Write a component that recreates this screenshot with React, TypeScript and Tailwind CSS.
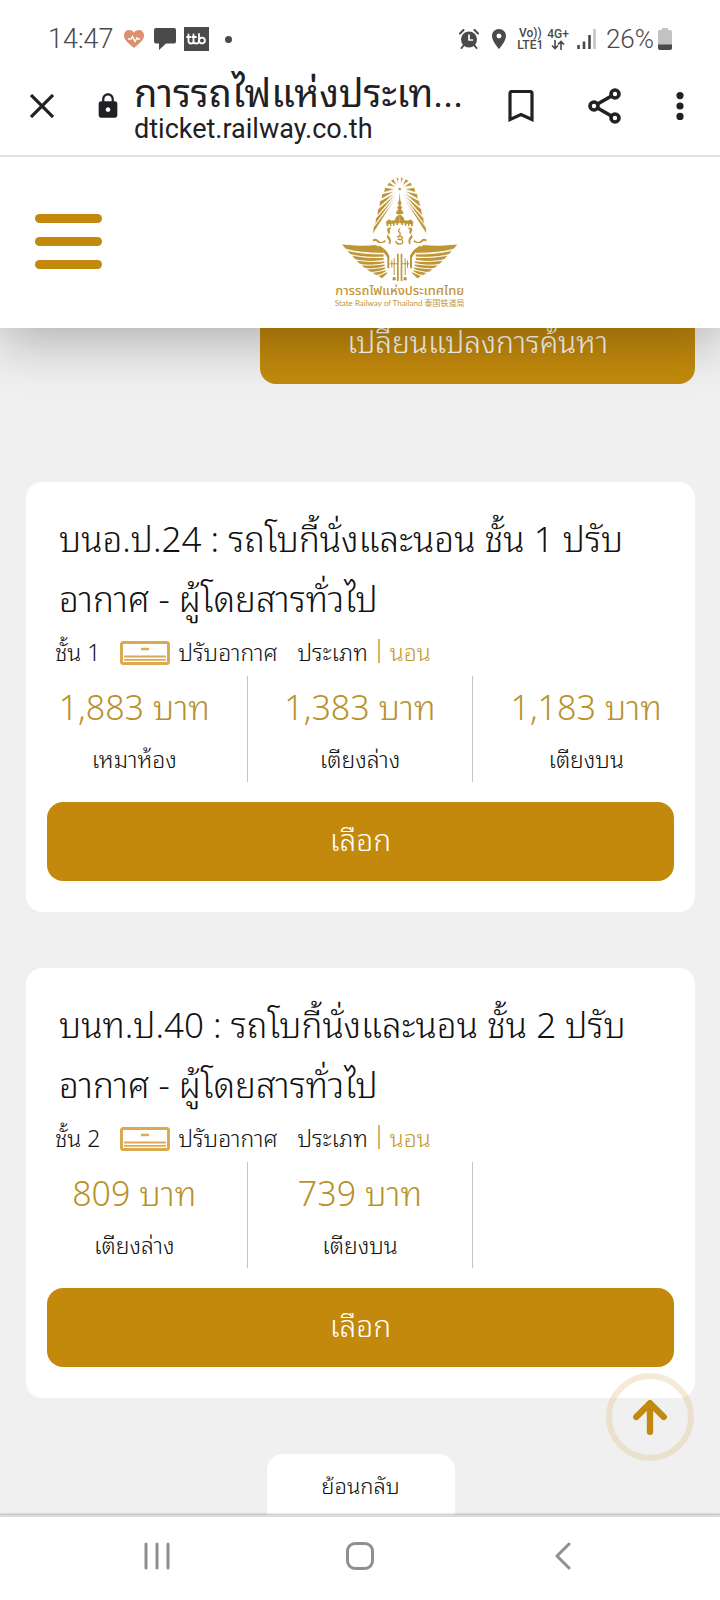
import { MdLocationOn, MdLock } from "react-icons/md";

const cars = [
  {
    id: "24",
    title: "บนอ.ป.24 : รถโบกี้นั่งและนอน ชั้น 1 ปรับอากาศ - ผู้โดยสารทั่วไป",
    level: "ชั้น 1",
    prices: [
      { amount: "1,883 บาท", berth: "เหมาห้อง" },
      { amount: "1,383 บาท", berth: "เตียงล่าง" },
      { amount: "1,183 บาท", berth: "เตียงบน" },
    ],
  },
  {
    id: "40",
    title: "บนท.ป.40 : รถโบกี้นั่งและนอน ชั้น 2 ปรับอากาศ - ผู้โดยสารทั่วไป",
    level: "ชั้น 2",
    prices: [
      { amount: "809 บาท", berth: "เตียงล่าง" },
      { amount: "739 บาท", berth: "เตียงบน" },
    ],
  },
];

export default function App() {
  return (
    <div className="flex h-screen flex-col overflow-hidden bg-[#f0f0f0] font-['Noto_Sans_Thai_Looped','Open_Sans','Noto_Sans_Thai','Noto_Sans',sans-serif] font-light text-[#111]">
      <StatusBar />
      <BrowserBar />
      <SiteHeader />

      <main className="relative min-h-0 flex-1 overflow-hidden pr-[25px] pl-[26px]">
        <div className="-mt-6 flex justify-end">
          <button type="button" className="h-20 w-[65%] rounded-2xl bg-[#c2890c] pb-2 text-3xl text-white">
            เปลี่ยนแปลงการค้นหา
          </button>
        </div>

        <div className="mt-[98px] space-y-14">
          {cars.map((car) => (
            <CarCard key={car.id} car={car} />
          ))}
        </div>

        <div className="mt-14 flex justify-center">
          <button type="button" className="h-20 w-[188px] rounded-2xl bg-white pb-5 text-[22px]">
            ย้อนกลับ
          </button>
        </div>

        <button
          type="button"
          aria-label="เลื่อนขึ้นด้านบน"
          className="absolute right-[26px] bottom-[54px] flex size-[88px] items-center justify-center rounded-full border-6 border-[#e0c48c]/35"
        >
          <svg viewBox="0 0 34 34" className="size-9" fill="none" stroke="#c2890c" strokeWidth="6" strokeLinecap="round" strokeLinejoin="round">
            <path d="M17 31V5M4 17 17 4l13 13" />
          </svg>
        </button>
      </main>

      <SystemNav />
    </div>
  );
}

type Car = (typeof cars)[number];

function CarCard({ car }: { car: Car }) {
  return (
    <section className="rounded-2xl bg-white px-[21px] pt-6 pb-[31px]">
      <h2 className="px-3 text-[35px] leading-[60px]">{car.title}</h2>

      <div className="flex h-[50px] items-center px-2 text-[23px]">
        <span className="mr-5">{car.level}</span>
        <AirconIcon />
        <span className="ml-2">ปรับอากาศ</span>
        <span className="ml-5">ประเภท</span>
        <span className="ml-[10px] border-l-2 border-[#dcb25c] pl-[10px] leading-6 text-[#c99a2e]">นอน</span>
      </div>

      <div className="-mx-[25px] grid h-[106px] grid-cols-3 divide-x divide-[#c4c4c4] text-center">
        {[0, 1, 2].map((i) => (
          <div key={i}>
            {car.prices[i] && (
              <>
                <p className="text-[34px] leading-[58px] text-[#b8922b]">{car.prices[i].amount}</p>
                <p className="text-[23px] leading-12">{car.prices[i].berth}</p>
              </>
            )}
          </div>
        ))}
      </div>

      <button type="button" className="mt-5 h-[79px] w-full rounded-2xl bg-[#c2890c] pb-2 text-3xl text-white">
        เลือก
      </button>
    </section>
  );
}

function AirconIcon() {
  return (
    <svg viewBox="0 0 50 24" className="mt-1 h-6 w-[50px]" fill="none" stroke="#dba950">
      <rect x="1.500" y="1.500" width="47" height="21" rx="2" strokeWidth="3" />
      <path d="M21 8h8" strokeWidth="2.500" />
      <path d="M4 15.500h42M4 18.800h42" strokeWidth="1.800" />
    </svg>
  );
}

function StatusBar() {
  return (
    <div className="flex h-16 shrink-0 items-center justify-between bg-white px-12 pt-[14px] font-[Roboto,sans-serif] text-[#4a4a4a]">
      <div className="flex items-center">
        <span className="text-[27px]">14:47</span>
        <svg viewBox="0 0 20 18" className="ml-[10px] h-[18px] w-5">
          <path d="M10 18C4 13 0 10 0 5.500 0 2 2.500 0 5.200 0 7.200 0 9 1 10 2.700 11 1 12.800 0 14.800 0 17.500 0 20 2 20 5.500 20 10 16 13 10 18z" fill="#dc906d" />
          <path d="M4 9h3l1.500-2.500 2.500 5L13 8l1 1h2" fill="none" stroke="#fff" strokeWidth="1.400" />
        </svg>
        <svg viewBox="0 0 22 22" className="ml-[10px] size-[22px]" fill="#4a4a4a">
          <path d="M2 0h18a2 2 0 0 1 2 2v11.500a2 2 0 0 1-2 2H12L5 22v-6.500H2a2 2 0 0 1-2-2V2a2 2 0 0 1 2-2z" />
        </svg>
        <span className="ml-2 flex h-6 w-[25px] items-center justify-center bg-[#4a4a4a]">
          <svg viewBox="0 0 20 12" className="h-3 w-5" fill="none" stroke="#fff" strokeWidth="1.800" strokeLinecap="round">
            <path d="M2.500 1.500V8q0 2.500 2.500 2.500T7.500 8V1.500M1 4h3.500M6.500 4H10M7.500 8q0 2.500 2.700 2.500T13 8V1" />
            <circle cx="16" cy="7.600" r="2.900" />
          </svg>
        </span>
        <span className="ml-4 size-[7px] rounded-full bg-[#4a4a4a]" />
      </div>

      <div className="flex items-center">
        <AlarmIcon />
        <MdLocationOn className="ml-2 size-6" />
        <span className="ml-[6px] text-center text-xs leading-3 font-medium">
          Vo))
          <br />
          LTE1
        </span>
        <span className="ml-1 flex flex-col items-center text-xs leading-3 font-medium">
          4G+
          <svg viewBox="0 0 14 10" className="h-[10px] w-[14px]" fill="none" stroke="currentColor" strokeWidth="1.600">
            <path d="M4 0v8.500M1 5.500l3 3 3-3M10 10V1.500M7 4.500l3-3 3 3" />
          </svg>
        </span>
        <svg viewBox="0 0 19 20" className="ml-2 h-5 w-[19px]">
          <path d="M1.500 16v4M7 12.500V20M12.500 6v14" stroke="#4a4a4a" strokeWidth="2.600" />
          <path d="M17.500 0v20" stroke="#c4c4c4" strokeWidth="2.600" />
        </svg>
        <span className="ml-[10px] text-[26px]">26%</span>
        <svg viewBox="0 0 14 22" className="ml-1 h-[22px] w-[14px]">
          <path d="M4 0h6v2h2.500Q14 2 14 4v16q0 2-2 2H2q-2 0-2-2V4q0-2 1.500-2H4z" fill="#c2c2c2" />
          <path d="M0 16.500h14V20q0 2-2 2H2q-2 0-2-2z" fill="#4a4a4a" />
        </svg>
      </div>
    </div>
  );
}

function AlarmIcon() {
  return (
    <svg viewBox="0 0 20 20" className="size-5" fill="none" stroke="#4a4a4a" strokeWidth="2" strokeLinecap="round">
      <circle cx="10" cy="10.500" r="8" fill="#4a4a4a" stroke="none" />
      <path d="M1 4.500 4.500 1M19 4.500 15.500 1M4.500 16.500 2.500 19M15.500 16.500l2 2.500" />
      <path d="M10 6v5h3.500" stroke="#fff" strokeWidth="1.700" />
    </svg>
  );
}

function BrowserBar() {
  return (
    <div className="relative z-20 flex h-[93px] shrink-0 items-center border-b-2 border-[#e2e2e2] bg-white pr-9 pb-2 pl-[30px] font-[Roboto,'Noto_Sans_Thai_Looped','Noto_Sans_Thai',sans-serif] font-normal text-[#202124]">
      <button type="button" aria-label="ปิด" className="shrink-0">
        <svg viewBox="0 0 24 24" className="size-6" stroke="currentColor" strokeWidth="3.200">
          <path d="M1 1l22 22M23 1 1 23" />
        </svg>
      </button>
      <MdLock className="ml-10 size-7 shrink-0" />
      <div className="ml-3 min-w-0 flex-1">
        <p className="truncate text-[38px] leading-[46px]">การรถไฟแห่งประเท...</p>
        <p className="text-[27px] leading-6">dticket.railway.co.th</p>
      </div>
      <button type="button" aria-label="บุ๊กมาร์ก" className="ml-9 shrink-0">
        <svg viewBox="0 0 26 32" className="h-8 w-[26px]" fill="none" stroke="currentColor" strokeWidth="3.200">
          <path d="M2 29.500V3.500q0-2 2-2h18q2 0 2 2v26l-11-5z" />
        </svg>
      </button>
      <button type="button" aria-label="แชร์" className="ml-[54px] shrink-0">
        <svg viewBox="0 0 34 36" className="h-9 w-[34px]" fill="none" stroke="currentColor" strokeWidth="3.600">
          <circle cx="6" cy="18" r="4" />
          <circle cx="27" cy="6" r="4" />
          <circle cx="27" cy="30" r="4" />
          <path d="M9.500 16 23.500 8M9.500 20l14 8" />
        </svg>
      </button>
      <button type="button" aria-label="เมนูเพิ่มเติม" className="ml-[54px] shrink-0">
        <svg viewBox="0 0 8 28" className="h-7 w-2" fill="currentColor">
          <circle cx="4" cy="3.600" r="3.600" />
          <circle cx="4" cy="14" r="3.600" />
          <circle cx="4" cy="24.400" r="3.600" />
        </svg>
      </button>
    </div>
  );
}

function SiteHeader() {
  return (
    <header className="relative z-10 grid h-[171px] shrink-0 grid-cols-[1fr_auto_1fr] items-center bg-white px-[35px] pb-[2px] shadow-[0_16px_48px_rgba(0,0,0,0.25)]">
      <button type="button" aria-label="เมนู" className="flex w-[67px] flex-col gap-[14px]">
        <span className="h-[9px] w-full rounded-full bg-[#c2890c]" />
        <span className="h-[9px] w-full rounded-full bg-[#c2890c]" />
        <span className="h-[9px] w-full rounded-full bg-[#c2890c]" />
      </button>
      <a href="#top" aria-label="การรถไฟแห่งประเทศไทย" className="ml-20">
        <RailwayLogo />
      </a>
    </header>
  );
}

// wedges that widen outwards from the halo
const rays = [
  "M236 66 228 45 236 42z",
  "M232 69 211 54 221 47z",
  "M229 73 200 68 207 57z",
  "M226 78 191 89 194 73z",
  "M226 84 183 109 186 92z",
  "M227 89 177 133 179 114z",
  "M228 93 171 160 173 139z",
  "M229 97 164 187 167 166z",
  "M230 101 157 216 160 193z",
];

const feathers = [
  "M64 243Q120 250 168 245L192 261 192 271Q110 270 76 258z",
  "M80 262Q130 274 192 273V282Q125 286 90 274z",
  "M94 277Q140 286 192 284V292Q135 301 104 289z",
  "M108 292Q150 298 194 294V301Q145 314 118 303z",
  "M122 306Q160 308 195 303V310Q155 324 133 315z",
  "M138 318Q170 317 197 312V318Q170 332 150 327z",
  "M155 329Q180 325 199 320V325Q182 339 168 337z",
  "M173 339 202 326 203 331 186 347z",
];

function HalfEmblem() {
  return (
    <>
      <g stroke="#fff" strokeWidth="2.500">
        {rays.map((d) => (
          <path key={d} d={d} />
        ))}
        {feathers.map((d) => (
          <path key={d} d={d} />
        ))}
      </g>
      <path d="M176 247Q198 258 208 278V316H202V284Q194 268 176 256z" />
      <path d="M239 154Q232 160 226 164V171L214 173 207 169 198 176 200 190H205V184H210V190H214V182H219V188H224V181H229V186H234V181H239z" />
      <path d="M203 194H213V199H208L211 208 204 216 210 224 213 232 211 244 206 242 207 232 200 222 205 210 201 202z" />
      <path d="M158 230Q168 224 176 233T194 231L198 236Q186 242 174 239 166 230 160 236z" />
      <path d="M231 272H236V354H231zM214 292H217V314H214zM221 286H224V336H221zM210 301H231V304H210zM219 342H226L228 352H217z" />
    </>
  );
}

function RailwayLogo() {
  return (
    <svg viewBox="42 36 396 402" className="h-[134px] w-[132px]" fill="#bf9636">
      <HalfEmblem />
      <g transform="matrix(-1 0 0 1 478 0)">
        <HalfEmblem />
      </g>
      <circle cx="239" cy="78" r="4" />
      <path d="M239 88 241 112 245 122 241 126 247 134 243 139 251 149 246 154H232L227 149 235 139 231 134 237 126 233 122 237 112z" />
      <path d="M240 197q-8 6-2 11t-1 11" fill="none" stroke="#bf9636" strokeWidth="4" />
      <path d="M231 222q16-5 16 2t-14 5q14-2 15 6t-9 8-12-9" fill="none" stroke="#bf9636" strokeWidth="4" />
      <text x="239" y="396" textAnchor="middle" fontSize="39" fontWeight="500" fontFamily="'Noto Sans Thai','Noto Sans',sans-serif">
        การรถไฟแห่งประเทศไทย
      </text>
      <text x="239" y="428" textAnchor="middle" fontSize="24" fontWeight="400" fontFamily="Lato,'Noto Sans CJK SC',sans-serif">
        State Railway of Thailand 泰国铁道局
      </text>
    </svg>
  );
}

function SystemNav() {
  return (
    <nav className="relative z-10 grid h-[85px] shrink-0 grid-cols-3 place-items-center border-t-2 border-[#dcdcdc] bg-white pr-14 pb-[6px] pl-14 shadow-[0_-1px_2px_rgba(0,0,0,0.25)]">
      <button type="button" aria-label="แอปล่าสุด">
        <svg viewBox="0 0 26 28" className="h-7 w-[26px]" stroke="#8f8f8f" strokeWidth="3" strokeLinecap="round">
          <path d="M2 2v24M13 2v24M24 2v24" />
        </svg>
      </button>
      <button type="button" aria-label="หน้าแรก">
        <svg viewBox="0 0 28 28" className="size-7" fill="none" stroke="#8f8f8f" strokeWidth="3">
          <rect x="1.500" y="1.500" width="25" height="25" rx="7.500" />
        </svg>
      </button>
      <button type="button" aria-label="ย้อนกลับ">
        <svg viewBox="0 0 16 28" className="h-7 w-4" fill="none" stroke="#8f8f8f" strokeWidth="3" strokeLinecap="round" strokeLinejoin="round">
          <path d="M14 2 2 14l12 12" />
        </svg>
      </button>
    </nav>
  );
}
